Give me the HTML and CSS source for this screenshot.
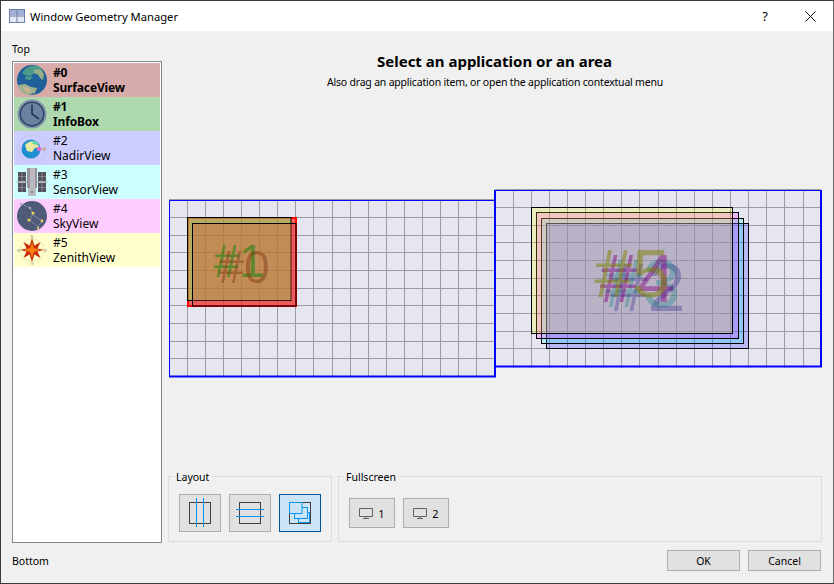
FILE: index.html
```html
<!DOCTYPE html>
<html lang="en">
<head>
<meta charset="utf-8">
<title>Window Geometry Manager</title>
<link rel="stylesheet" href="styles.css">
</head>
<body>
<div class="window">
  <header class="titlebar">
    <svg class="title-icon" width="16" height="14" viewBox="0 0 16 14"><rect x=".5" y=".5" width="15" height="13" fill="#e4e8f4" stroke="#6d7fa8"/><rect x="1" y="1" width="14" height="5" fill="#a3b0d6"/><path d="M8 1v12M1 7h14" stroke="#6d7fa8" fill="none"/></svg>
    <span class="title-text">Window Geometry Manager</span>
    <span class="title-help">?</span>
    <svg class="title-close" width="11" height="11" viewBox="0 0 11 11"><path d="M.5.5l10 10M10.500.5l-10 10" stroke="#111" fill="none"/></svg>
  </header>
  <div class="content">
    <aside class="side">
      <div class="side-label">Top</div>
      <ul class="app-list">
        <li class="app c0 strong">
          <svg class="icon" viewBox="0 0 30 30"><circle cx="15" cy="15" r="15" fill="#20609a"/><path d="M9 3q7-4 14-1l3 5-4 4-5-3-3 3-6-1-3-2z" fill="#4c9a8c"/><path d="M17 5l6-1 4 5-1 6-3-2-2-4-4-1z" fill="#9aae8a"/><path d="M1 20l7-1 6 3 6 1-2 5-7 2-7-3z" fill="#9eb08e"/><path d="M6 22l6 1 2 4-5 0z" fill="#c9b88e"/><path d="M9 11l7 1-3 3-5-1z" fill="#4c9a8c"/></svg>
          <div class="app-text"><span>#0</span><span>SurfaceView</span></div>
        </li>
        <li class="app c1 strong">
          <svg class="icon" viewBox="0 0 30 30"><circle cx="15" cy="15" r="14.5" fill="#7d93ad"/><circle cx="15" cy="15" r="12.5" fill="#2d415c"/><circle cx="15" cy="15" r="11" fill="#6a83a3"/><path d="M15 5.500V15l7 5" stroke="#26364d" stroke-width="1.6" fill="none"/></svg>
          <div class="app-text"><span>#1</span><span>InfoBox</span></div>
        </li>
        <li class="app c2">
          <svg class="icon" viewBox="0 0 30 30"><circle cx="15" cy="16" r="14" fill="none" stroke="#b4b4cc" stroke-dasharray="1 1.5"/><circle cx="14" cy="16" r="9.500" fill="#1f8fd0"/><path d="M8 12q6-6 12-3l2 5-4 1-3 4-5-1z" fill="#e8e8a0"/><path d="M14 8l6 1 1 3-5-1z" fill="#5fd8a8"/><circle cx="22" cy="16" r="2.300" fill="#e86cc8"/><path d="M24 16h5M27 14v4" stroke="#c09a70"/></svg>
          <div class="app-text"><span>#2</span><span>NadirView</span></div>
        </li>
        <li class="app c3">
          <svg class="icon" viewBox="0 0 30 30"><rect x="1" y="5" width="8" height="9" fill="#54505c"/><rect x="1" y="16" width="8" height="9" fill="#54505c"/><rect x="21" y="5" width="8" height="9" fill="#54505c"/><rect x="21" y="16" width="8" height="9" fill="#54505c"/><path d="M1 9.500h8M5 5v20M1 20.500h8M21 9.500h8M25 5v20M21 20.500h8" stroke="#9a98a4" stroke-width=".7"/><rect x="0" y="14" width="30" height="2" fill="#a8b4b4"/><rect x="10" y="1" width="10" height="20" fill="#98949c"/><rect x="13" y="1" width="5" height="20" fill="#bcb8c0"/><rect x="11" y="21" width="8" height="8" fill="#b8bcc0"/><circle cx="15" cy="25" r="1" fill="#70707a"/></svg>
          <div class="app-text"><span>#3</span><span>SensorView</span></div>
        </li>
        <li class="app c4">
          <svg class="icon" viewBox="0 0 30 30"><circle cx="15" cy="15" r="15" fill="#4e5a76"/><path d="M3 2l10 5 3 5-3 7 8 7 4-6-9-6" stroke="#8d96ad" stroke-width=".8" fill="none"/><circle cx="16" cy="12" r="1.600" fill="#e8d060"/><circle cx="12" cy="19" r="1.600" fill="#e8d060"/><circle cx="25" cy="20" r="1.400" fill="#e8d060"/><circle cx="21" cy="27" r="1.200" fill="#d8c870"/><circle cx="13" cy="7" r="1.100" fill="#b8c0d0"/><circle cx="4" cy="3" r="1.100" fill="#a0a8c0"/></svg>
          <div class="app-text"><span>#4</span><span>SkyView</span></div>
        </li>
        <li class="app c5">
          <svg class="icon" viewBox="0 0 30 30"><circle cx="15" cy="15" r="11.500" fill="none" stroke="#d0c8a0" stroke-dasharray="1 1.5"/><path d="M15 3l2.500 7.500 6-3.500-3 6.500L27 15l-6.500 1.500 3 6.500-6-3.500L15 27l-2.500-7.500-6 3.500 3-6.500L3 15l6.500-1.500-3-6.500 6 3.500z" fill="#c8300c"/><path d="M15 7l2 6 6 2-6 2-2 6-2-6-6-2 6-2z" fill="#f97a10"/><g class="compass"><text x="15" y="3">N</text><text x="15" y="30">S</text><text x="1.500" y="16.500">W</text><text x="28.500" y="16.500">E</text></g></svg>
          <div class="app-text"><span>#5</span><span>ZenithView</span></div>
        </li>
      </ul>
      <div class="side-label bottom">Bottom</div>
    </aside>
    <main class="panel">
      <h1 class="heading">Select an application or an area</h1>
      <p class="subheading">Also drag an application item, or open the application contextual menu</p>
      <svg class="canvas" width="654" height="370" viewBox="168 100 654 370">
        <rect class="screen" x="169" y="199" width="326" height="178"/>
        <rect class="screen" x="495" y="189" width="326" height="178"/>
        <path class="grid" d="M187.500 199V377M205.500 199V377M223.500 199V377M241.500 199V377M259.500 199V377M277.500 199V377M295.500 199V377M313.500 199V377M332.500 199V377M350.500 199V377M368.500 199V377M386.500 199V377M404.500 199V377M422.500 199V377M440.500 199V377M458.500 199V377M476.500 199V377M169 199.500H495M169 217.500H495M169 235.500H495M169 252.500H495M169 270.500H495M169 288.500H495M169 305.500H495M169 323.500H495M169 341.500H495M169 358.500H495"/>
        <path class="grid" d="M513.500 189V368M531.500 189V368M549.500 189V368M567.500 189V368M585.500 189V368M603.500 189V368M621.500 189V368M639.500 189V368M658.500 189V368M676.500 189V368M694.500 189V368M712.500 189V368M730.500 189V368M748.500 189V368M766.500 189V368M784.500 189V368M803.500 189V368M495 189.500H821M495 207.500H821M495 225.500H821M495 242.500H821M495 260.500H821M495 278.500H821M495 295.500H821M495 313.500H821M495 331.500H821M495 348.500H821"/>
        <path class="edge-thin" d="M169.500 377V200.500H494M495 190.500H821"/>
        <path class="edge-thick" d="M169 376.500H495V190M495 366.500H821V190"/>

        <rect class="sel" x="188" y="218" width="108" height="88"/>
        <rect class="win w1" x="187.500" y="217.500" width="103.500" height="83"/>
        <rect class="win w0" x="192.500" y="223.500" width="103.500" height="82.500"/>
        <text class="label small t1" x="239" y="277">#1</text>
        <text class="label small t0" x="244" y="283">#0</text>

        <rect class="win w2" x="546.500" y="223.500" width="202" height="125"/>
        <rect class="win w3" x="541.500" y="218.500" width="202" height="125"/>
        <rect class="win w4" x="536.500" y="212.500" width="202" height="126"/>
        <rect class="win w5" x="531.500" y="207.500" width="201" height="126"/>
        <text class="label t2" x="647.500" y="311">#2</text>
        <text class="label t3" x="642.500" y="307">#3</text>
        <text class="label t4" x="637.500" y="302">#4</text>
        <text class="label t5" x="632" y="297">#5</text>
      </svg>
      <div class="groups">
        <section class="group group-layout">
          <span class="group-label">Layout</span>
          <button class="btn tool" type="button"><svg width="30" height="30" viewBox="0 0 30 30"><rect x="4.500" y="4.500" width="21" height="21" class="ic-frame"/><path d="M11.500 0V29M18.500 0V29" class="ic-line"/></svg></button>
          <button class="btn tool" type="button"><svg width="30" height="30" viewBox="0 0 30 30"><rect x="4.500" y="4.500" width="21" height="21" class="ic-frame"/><path d="M1 11.500H29M1 18.500H29" class="ic-line"/></svg></button>
          <button class="btn tool active" type="button"><svg width="30" height="30" viewBox="0 0 30 30"><rect x="4.500" y="4.500" width="21" height="21" class="ic-frame"/><rect x="13.500" y="14.500" width="11" height="10" class="ic-pane"/><rect x="9.500" y="9.500" width="13" height="11" class="ic-pane"/><rect x="4.500" y="4.500" width="12.500" height="11" class="ic-pane"/></svg></button>
        </section>
        <section class="group group-full">
          <span class="group-label">Fullscreen</span>
          <button class="btn screen-btn" type="button"><svg width="15" height="11" viewBox="0 0 15 11"><path d="M.5.500h13v8h-13z" class="ic-mon"/><path d="M4 10.500h6M7 9v1" class="ic-mon"/></svg><span>1</span></button>
          <button class="btn screen-btn" type="button"><svg width="15" height="11" viewBox="0 0 15 11"><path d="M.5.500h13v8h-13z" class="ic-mon"/><path d="M4 10.500h6M7 9v1" class="ic-mon"/></svg><span>2</span></button>
        </section>
      </div>
      <footer class="footer">
        <button class="btn action" type="button">OK</button>
        <button class="btn action" type="button">Cancel</button>
      </footer>
    </main>
  </div>
</div>
</body>
</html>
```
FILE: styles.css
```css
* { box-sizing: border-box; }
html, body { margin: 0; padding: 0; }
body {
  width: 834px;
  height: 584px;
  overflow: hidden;
  font-family: "Noto Sans", "Open Sans", sans-serif;
  font-size: 10.500px;
  color: #000;
}
.window {
  width: 834px;
  height: 584px;
  display: flex;
  flex-direction: column;
  background: #f0f0f0;
  border: 1px solid #3a3a3a;
  border-right-color: #6a6a6a;
}
.titlebar {
  height: 30px;
  flex: none;
  display: flex;
  align-items: center;
  background: #fff;
  padding: 0 17px 0 8px;
}
.title-icon { margin-right: 5px; }
.title-text { font-size: 11.200px; flex: 1; }
.title-help { font-size: 13px; margin-right: 37px; }
.content {
  flex: 1;
  min-height: 0;
  display: flex;
  gap: 6px;
  padding: 0 11px;
}
.side {
  width: 150px;
  flex: none;
  display: flex;
  flex-direction: column;
  padding: 11px 0 15px;
}
.side-label { height: 14px; line-height: 14px; }
.side-label.bottom { margin-top: 11px; }
.app-list {
  flex: 1;
  margin: 5px 0 0;
  padding: 1px;
  list-style: none;
  background: #fff;
  border: 1px solid #828790;
}
.app {
  height: 34px;
  display: flex;
  align-items: center;
  padding-left: 3px;
  gap: 6px;
}
.c0 { background: #d8abab; }
.c1 { background: #aed8ae; }
.c2 { background: #ccccff; }
.c3 { background: #ccffff; }
.c4 { background: #ffccff; }
.c5 { background: #ffffcc; }
.strong { font-weight: 700; letter-spacing: -.15px; }
.icon { width: 30px; height: 30px; flex: none; }
.compass text { font-size: 4px; fill: #8a8a70; text-anchor: middle; font-family: "Liberation Sans", sans-serif; }
.app-text { display: flex; flex-direction: column; line-height: 15px; font-size: 12px; }
.panel {
  width: 654px;
  flex: none;
  display: flex;
  flex-direction: column;
}
.heading {
  margin: 20px 0 0;
  font-size: 15px;
  line-height: 20px;
  font-weight: 700;
  text-align: center;
  padding-right: 1px;
}
.subheading {
  margin: 4px 0 0;
  font-size: 10.500px;
  letter-spacing: -.2px;
  line-height: 14px;
  text-align: center;
}
.canvas { display: block; flex: none; margin-top: 11px; }
.screen { fill: #e6e6f0; }
.grid { fill: none; stroke: #9c9ca0; stroke-width: 1; }
.edge-thin { fill: none; stroke: #0000ff; stroke-width: 1; }
.edge-thick { fill: none; stroke: #0000ff; stroke-width: 2; }
.sel { fill: rgba(255, 0, 0, .55); stroke: #ff0000; stroke-width: 2; }
.win { stroke: #000; stroke-width: 1; }
.w0 { fill: rgba(220, 67, 60, .3); }
.w1 { fill: rgba(110, 255, 90, .45); }
.w2 { fill: rgba(0, 0, 255, .2); }
.w3 { fill: rgba(0, 255, 255, .2); }
.w4 { fill: rgba(255, 0, 255, .2); }
.w5 { fill: rgba(255, 255, 0, .2); }
.label {
  font-family: "Liberation Sans", sans-serif;
  font-size: 68px;
  text-anchor: middle;
}
.label.small { font-size: 46px; }
.t0 { fill: rgba(130, 60, 20, .5); }
.t1 { fill: rgba(0, 128, 0, .5); }
.t2 { fill: rgba(0, 0, 128, .25); }
.t3 { fill: rgba(0, 128, 128, .3); }
.t4 { fill: rgba(128, 0, 128, .45); }
.t5 { fill: rgba(128, 128, 0, .5); }
.groups {
  display: flex;
  gap: 6px;
  height: 66px;
  margin-top: 6px;
  flex: none;
}
.group {
  position: relative;
  display: flex;
  align-items: center;
  border: 1px solid #dcdcdc;
}
.group-layout { width: 164px; gap: 8px; padding: 0 10px; }
.group-full { flex: 1; gap: 8px; padding: 0 10px; }
.group-label {
  position: absolute;
  top: -7px;
  left: 4px;
  padding: 0 3px;
  line-height: 14px;
  background: #f0f0f0;
}
.btn {
  font: inherit;
  color: #000;
  background: #e1e1e1;
  border: 1px solid #adadad;
  border-radius: 0;
  padding: 0;
  display: flex;
  align-items: center;
  justify-content: center;
}
.tool { width: 42px; height: 38px; margin-top: 8px; }
.tool svg { display: block; }
.tool.active { background: #cce4f7; border-color: #005499; }
.ic-frame { fill: none; stroke: #404040; }
.ic-line { fill: none; stroke: #0a94f0; }
.ic-pane { fill: #cce4f7; stroke: #0a94f0; }
.ic-mon { fill: none; stroke: #606060; }
.screen-btn { width: 46px; height: 30px; gap: 4px; margin-top: 8px; font-size: 11px; }
.footer {
  display: flex;
  justify-content: flex-end;
  gap: 8px;
  margin-top: 8px;
  padding-right: 1px;
}
.action { width: 73px; height: 21px; }
```
